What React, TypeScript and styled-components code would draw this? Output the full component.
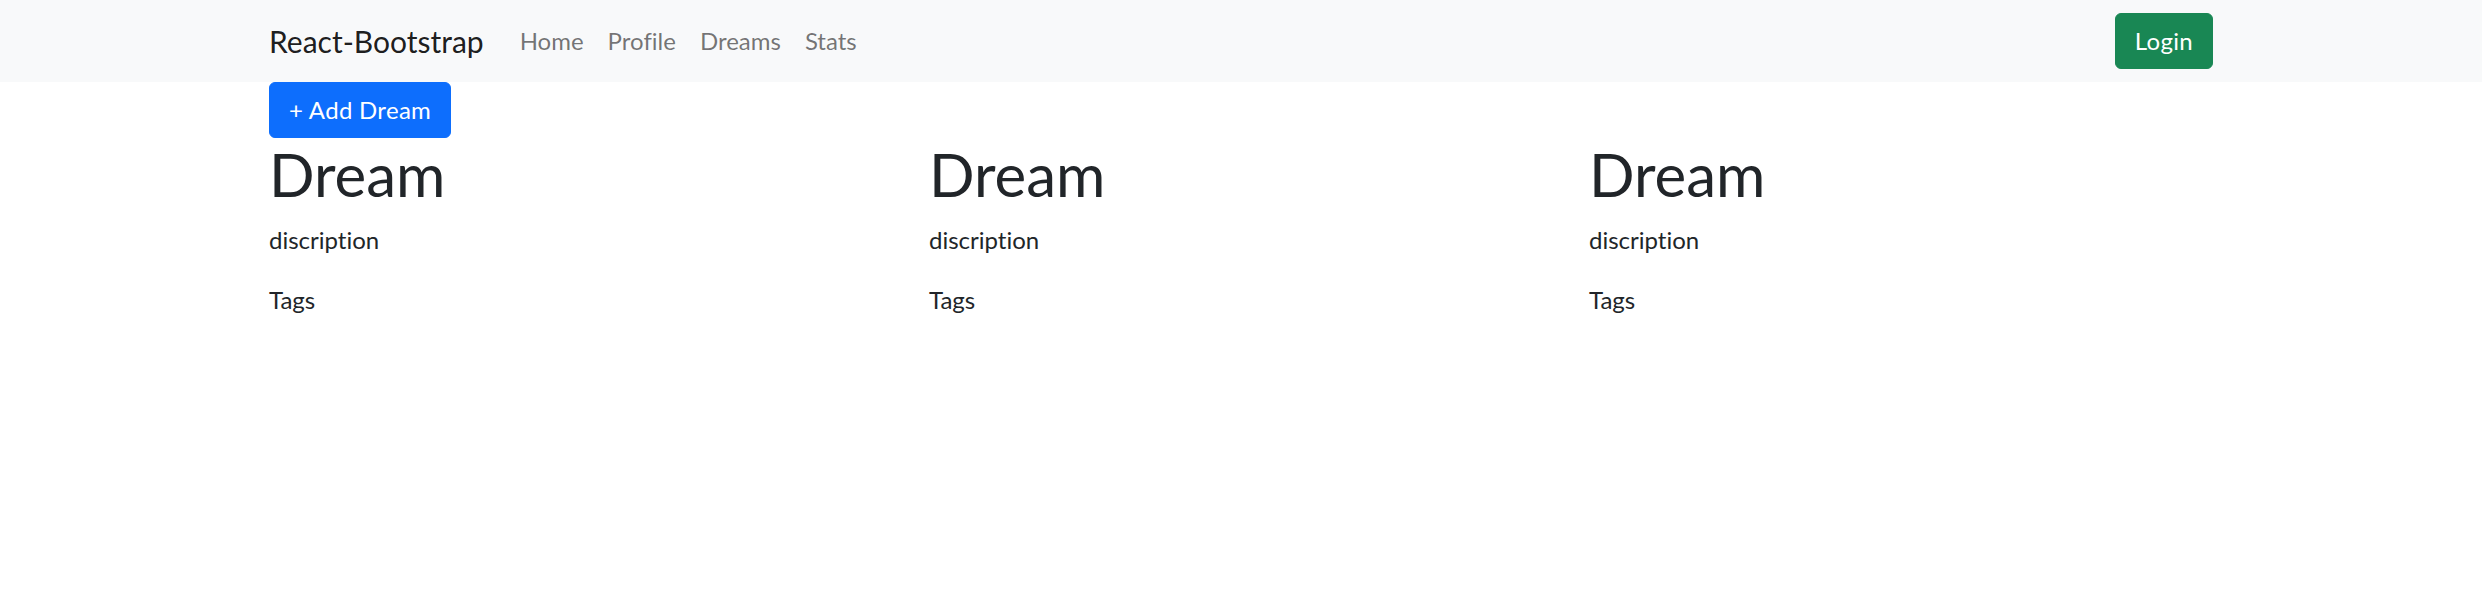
import React from "react";
import styled, { createGlobalStyle } from "styled-components";

const GlobalStyle = createGlobalStyle`
  *, *::before, *::after { box-sizing: border-box; }
  html, body { margin: 0; padding: 0; }
  body {
    font-family: "Lato", "Liberation Sans", sans-serif;
    font-size: 24px;
    line-height: 1.5;
    color: #212529;
    background: #ffffff;
    font-variant-ligatures: none;
    font-feature-settings: "liga" 0, "clig" 0;
  }
`;

const Navbar = styled.nav`
  background: #f8f9fa;
  padding: 11px 0;
`;

const Container = styled.div`
  max-width: 1980px;
  margin: 0 auto;
  padding: 0 18px;
`;

const NavInner = styled(Container)`
  display: flex;
  align-items: center;
  justify-content: space-between;
`;

const Left = styled.div`
  display: flex;
  align-items: center;
`;

const Brand = styled.a`
  font-size: 30px;
  line-height: 45px;
  padding: 7.5px 0;
  margin-right: 24px;
  color: rgba(0, 0, 0, 0.9);
  text-decoration: none;
  white-space: nowrap;
`;

const NavList = styled.div`
  display: flex;
`;

const NavLink = styled.a`
  display: block;
  padding: 12px;
  color: rgba(0, 0, 0, 0.55);
  text-decoration: none;
  line-height: 36px;
`;

const Button = styled.button<{ $variant: "primary" | "success" }>`
  font-family: inherit;
  font-size: 24px;
  line-height: 36px;
  padding: 9px 19px;
  border-radius: 6px;
  border: 1.5px solid ${(p) => (p.$variant === "primary" ? "#0d6efd" : "#198754")};
  background: ${(p) => (p.$variant === "primary" ? "#0d6efd" : "#198754")};
  color: #ffffff;
  cursor: pointer;
  display: inline-block;
  letter-spacing: 0.3px;
  font-variant-ligatures: none;
`;

const Grid = styled.div`
  display: grid;
  grid-template-columns: repeat(3, 1fr);
  column-gap: 36px;
`;

const Card = styled.div``;

const Title = styled.h1`
  font-size: 60px;
  font-weight: 400;
  line-height: 1.2;
  margin: 0 0 12px;
`;

const Text = styled.p`
  margin: 0 0 24px;
`;

export default function App() {
  const dreams = [1, 2, 3];
  return (
    <>
      <GlobalStyle />
      <Navbar>
        <NavInner>
          <Left>
            <Brand href="#">React-Bootstrap</Brand>
            <NavList>
              <NavLink href="#">Home</NavLink>
              <NavLink href="#">Profile</NavLink>
              <NavLink href="#">Dreams</NavLink>
              <NavLink href="#">Stats</NavLink>
            </NavList>
          </Left>
          <Button $variant="success">Login</Button>
        </NavInner>
      </Navbar>
      <Container>
        <Button $variant="primary">+ Add Dream</Button>
        <Grid>
          {dreams.map((d) => (
            <Card key={d}>
              <Title>Dream</Title>
              <Text>discription</Text>
              <Text>Tags</Text>
            </Card>
          ))}
        </Grid>
      </Container>
    </>
  );
}
